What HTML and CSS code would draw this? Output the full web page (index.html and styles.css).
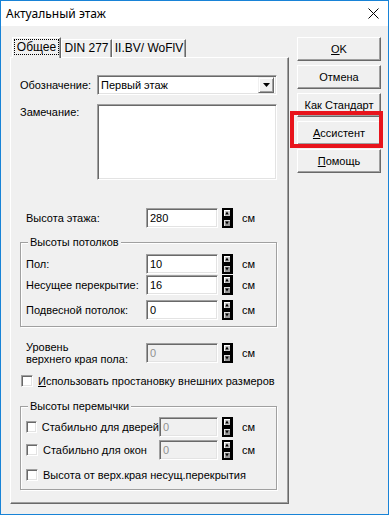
FILE: index.html
```html
<!DOCTYPE html>
<html lang="ru">
<head>
  <meta charset="UTF-8" />
  <title>Актуальный этаж</title>
  <link rel="stylesheet" href="styles.css">
</head>
<body>
  <svg width="0" height="0" class="defs">
    <symbol id="spin" viewBox="0 0 11 20">
      <rect x="0" y="0" width="11" height="20" fill="#000" />
      <rect x="2" y="2" width="6" height="6" fill="#c8c8c8" />
      <path d="M2 2h6v1H3v5H2z" fill="#fff" />
      <path d="M5 3.5 L6.8 6.5 L3.2 6.5 Z" fill="#000" />
      <rect x="2" y="12" width="6" height="6" fill="#9a9a9a" />
      <path d="M2 12h6v1H3v5H2z" fill="#e0e0e0" />
      <path d="M3.2 13.5 L6.8 13.5 L5 16.5 Z" fill="#000" />
    </symbol>
  </svg>

  <div class="window">
    <div class="titlebar">
      <span class="title">Актуальный этаж</span>
      <svg class="close" width="11" height="11" viewBox="0 0 11 11">
        <path d="M0.5 0.5 L10.5 10.5 M10.5 0.5 L0.5 10.5" stroke="#000" stroke-width="1" fill="none" />
      </svg>
    </div>

    <div class="client">
      <div class="sheet">
        <div class="tabs">
          <div class="tab tab-active"><span class="focus">Общее</span></div>
          <div class="tab tab-din">DIN 277</div>
          <div class="tab tab-bv">II.BV/ WoFlV</div>
        </div>

        <div class="panel">
          <div class="row row-name">
            <label class="lbl lbl-name">Обозначение:</label>
            <div class="combo">
              <span class="combo-text">Первый этаж</span>
              <span class="combo-btn">
                <svg width="7" height="4" viewBox="0 0 7 4"><path d="M0 0h7L3.5 4z" fill="#000" /></svg>
              </span>
            </div>
          </div>

          <div class="row row-note">
            <label class="lbl lbl-name lbl-top">Замечание:</label>
            <div class="memo"></div>
          </div>

          <div class="row row-height">
            <label class="lbl lbl-value">Высота этажа:</label>
            <div class="field">280</div>
            <svg class="spin"><use href="#spin" /></svg>
            <span class="unit">см</span>
          </div>

          <fieldset class="group group-ceil">
            <legend>Высоты потолков</legend>
            <div class="row grow grow-1">
              <label class="lbl lbl-group">Пол:</label>
              <div class="field">10</div>
              <svg class="spin"><use href="#spin" /></svg>
              <span class="unit">см</span>
            </div>
            <div class="row grow grow-2">
              <label class="lbl lbl-group">Несущее перекрытие:</label>
              <div class="field">16</div>
              <svg class="spin"><use href="#spin" /></svg>
              <span class="unit">см</span>
            </div>
            <div class="row grow grow-3">
              <label class="lbl lbl-group">Подвесной потолок:</label>
              <div class="field">0</div>
              <svg class="spin"><use href="#spin" /></svg>
              <span class="unit">см</span>
            </div>
          </fieldset>

          <div class="row row-level">
            <label class="lbl lbl-value lbl-two">Уровень<br>верхнего края пола:</label>
            <div class="field disabled">0</div>
            <svg class="spin"><use href="#spin" /></svg>
            <span class="unit">см</span>
          </div>

          <div class="check check-dims">
            <span class="box"></span>
            <span><u>И</u>спользовать простановку внешних размеров</span>
          </div>

          <fieldset class="group group-lintel">
            <legend>Высоты перемычки</legend>
            <div class="row lrow lrow-1">
              <div class="check check-lintel"><span class="box"></span><span>Стабильно для дверей</span></div>
              <div class="field field-short disabled">0</div>
              <svg class="spin"><use href="#spin" /></svg>
              <span class="unit">см</span>
            </div>
            <div class="row lrow lrow-2">
              <div class="check check-lintel"><span class="box"></span><span>Стабильно для окон</span></div>
              <div class="field field-short disabled">0</div>
              <svg class="spin"><use href="#spin" /></svg>
              <span class="unit">см</span>
            </div>
            <div class="row lrow lrow-3">
              <div class="check"><span class="box"></span><span>Высота от верх.края несущ.перекрытия</span></div>
            </div>
          </fieldset>
        </div>
      </div>

      <div class="buttons">
        <button class="btn"><u>O</u>K</button>
        <button class="btn">Отмена</button>
        <button class="btn">Как Стандарт</button>
        <button class="btn"><u>А</u>ссистент</button>
        <button class="btn"><u>П</u>омощь</button>
        <div class="marker"></div>
      </div>
    </div>
  </div>
</body>
</html>
```

FILE: styles.css
```css
* {
  box-sizing: border-box;
}

body {
  margin: 0;
  font-family: "Liberation Sans", Arial, sans-serif;
  font-size: 11px;
  color: #000;
  background: #f0f0f0;
  white-space: nowrap;
}

.defs {
  position: absolute;
}

.window {
  width: 389px;
  height: 515px;
  border: 1px solid #1883d7;
  background: #f0f0f0;
  display: flex;
  flex-direction: column;
}

.titlebar {
  height: 25px;
  background: #fff;
  display: flex;
  align-items: center;
  justify-content: space-between;
  padding: 0 9px 0 5px;
}

.title {
  font-family: "Noto Sans", sans-serif;
  font-size: 12px;
}

.client {
  display: flex;
  gap: 8px;
  padding: 11px 0 0 9px;
}

.sheet {
  width: 279px;
}

/* tabs */
.tabs {
  display: flex;
  align-items: flex-end;
  height: 20px;
  padding-left: 2px;
  position: relative;
  z-index: 1;
}

.tab {
  height: 18px;
  border: 1px solid;
  border-bottom: none;
  border-color: #fff #696969 transparent #fff;
  box-shadow: inset -1px 0 #a0a0a0;
  background: #f0f0f0;
  text-align: center;
  line-height: 16px;
  font-size: 12px;
}

.tab-active {
  width: 49px;
  height: 21px;
  margin-bottom: -1px;
  padding-top: 1px;
}

.tab-din {
  width: 51px;
}

.tab-bv {
  width: 74px;
}

.focus {
  display: inline-block;
  outline: 1px dotted #000;
  padding: 0 2px;
  line-height: 14px;
}

.panel {
  height: 447px;
  border: 1px solid;
  border-color: #fff #696969 #696969 #fff;
  box-shadow: inset -1px -1px #a0a0a0;
  padding: 17px 0 0 9px;
}

/* rows */
.row {
  display: flex;
  align-items: center;
  height: 20px;
}

.lbl {
  line-height: 13px;
}

.lbl-name {
  width: 77px;
}

.lbl-top {
  align-self: flex-start;
  padding-top: 2px;
}

.lbl-value {
  width: 120px;
  margin-left: 6px;
}

.lbl-group {
  width: 120px;
}

.row-note {
  height: 76px;
  margin-top: 9px;
}

.row-height {
  margin-top: 28px;
}

.combo,
.memo,
.field {
  border: 1px solid;
  border-color: #a0a0a0 #fff #fff #a0a0a0;
  box-shadow: inset 1px 1px #696969, inset -1px -1px #e3e3e3;
  background: #fff;
}

.combo {
  width: 180px;
  height: 20px;
  display: flex;
  align-items: center;
  justify-content: space-between;
  padding: 0 2px 0 3px;
}

.combo-btn {
  width: 16px;
  height: 16px;
  display: flex;
  align-items: center;
  justify-content: center;
  background: #f0f0f0;
  border: 1px solid;
  border-color: #f0f0f0 #696969 #696969 #f0f0f0;
  box-shadow: inset 1px 1px #fff, inset -1px -1px #a0a0a0;
}

.memo {
  width: 180px;
  height: 76px;
}

.field {
  width: 72px;
  height: 20px;
  padding: 0 3px;
  line-height: 18px;
}

.field-short {
  width: 59px;
}

.disabled {
  background: #f0f0f0;
  color: #909090;
}

.spin {
  width: 11px;
  height: 20px;
  margin-left: 4px;
}

.unit {
  margin-left: 9px;
}

/* group boxes */
.group {
  width: 257px;
  margin: 0;
  border: 1px solid #a0a0a0;
  box-shadow: inset 1px 1px #fff, 1px 1px #fff;
  padding: 0 0 0 5px;
}

.group legend {
  padding: 0 2px;
  margin-left: 2px;
  line-height: 13px;
  background: #f0f0f0;
}

.group-ceil {
  margin-top: 8px;
  padding-top: 5px;
  padding-bottom: 6px;
}

.grow-2 {
  margin-top: 1px;
}

.grow-3 {
  margin-top: 5px;
}

.row-level {
  height: 26px;
  margin-top: 13px;
}

.lbl-two {
  line-height: 12px;
}

/* checkboxes */
.check {
  display: flex;
  align-items: center;
}

.box {
  width: 12px;
  height: 12px;
  margin-right: 5px;
  background: #fff;
  border: 1px solid;
  border-color: #a0a0a0 #fff #fff #a0a0a0;
  box-shadow: inset 1px 1px #696969, inset -1px -1px #e3e3e3;
}

.check-dims {
  height: 14px;
  margin: 8px 0 0 1px;
}

.group-lintel {
  margin-top: 12px;
  padding-top: 4px;
  padding-bottom: 4px;
}

.check-lintel {
  width: 133px;
}

.lrow-2 {
  margin-top: 3px;
}

.lrow-3 {
  margin-top: 5px;
}

/* buttons */
.buttons {
  display: flex;
  flex-direction: column;
  gap: 4px;
  width: 84px;
  position: relative;
}

.btn {
  height: 24px;
  font-family: "Liberation Sans", Arial, sans-serif;
  font-size: 11px;
  color: #000;
  background: #f0f0f0;
  border: 1px solid;
  border-color: #fff #696969 #696969 #fff;
  box-shadow: inset -1px -1px #a0a0a0;
  padding: 0;
}

.marker {
  position: absolute;
  left: -7px;
  top: 74px;
  width: 93px;
  height: 37px;
  border: 4px solid #e8141c;
}
```
